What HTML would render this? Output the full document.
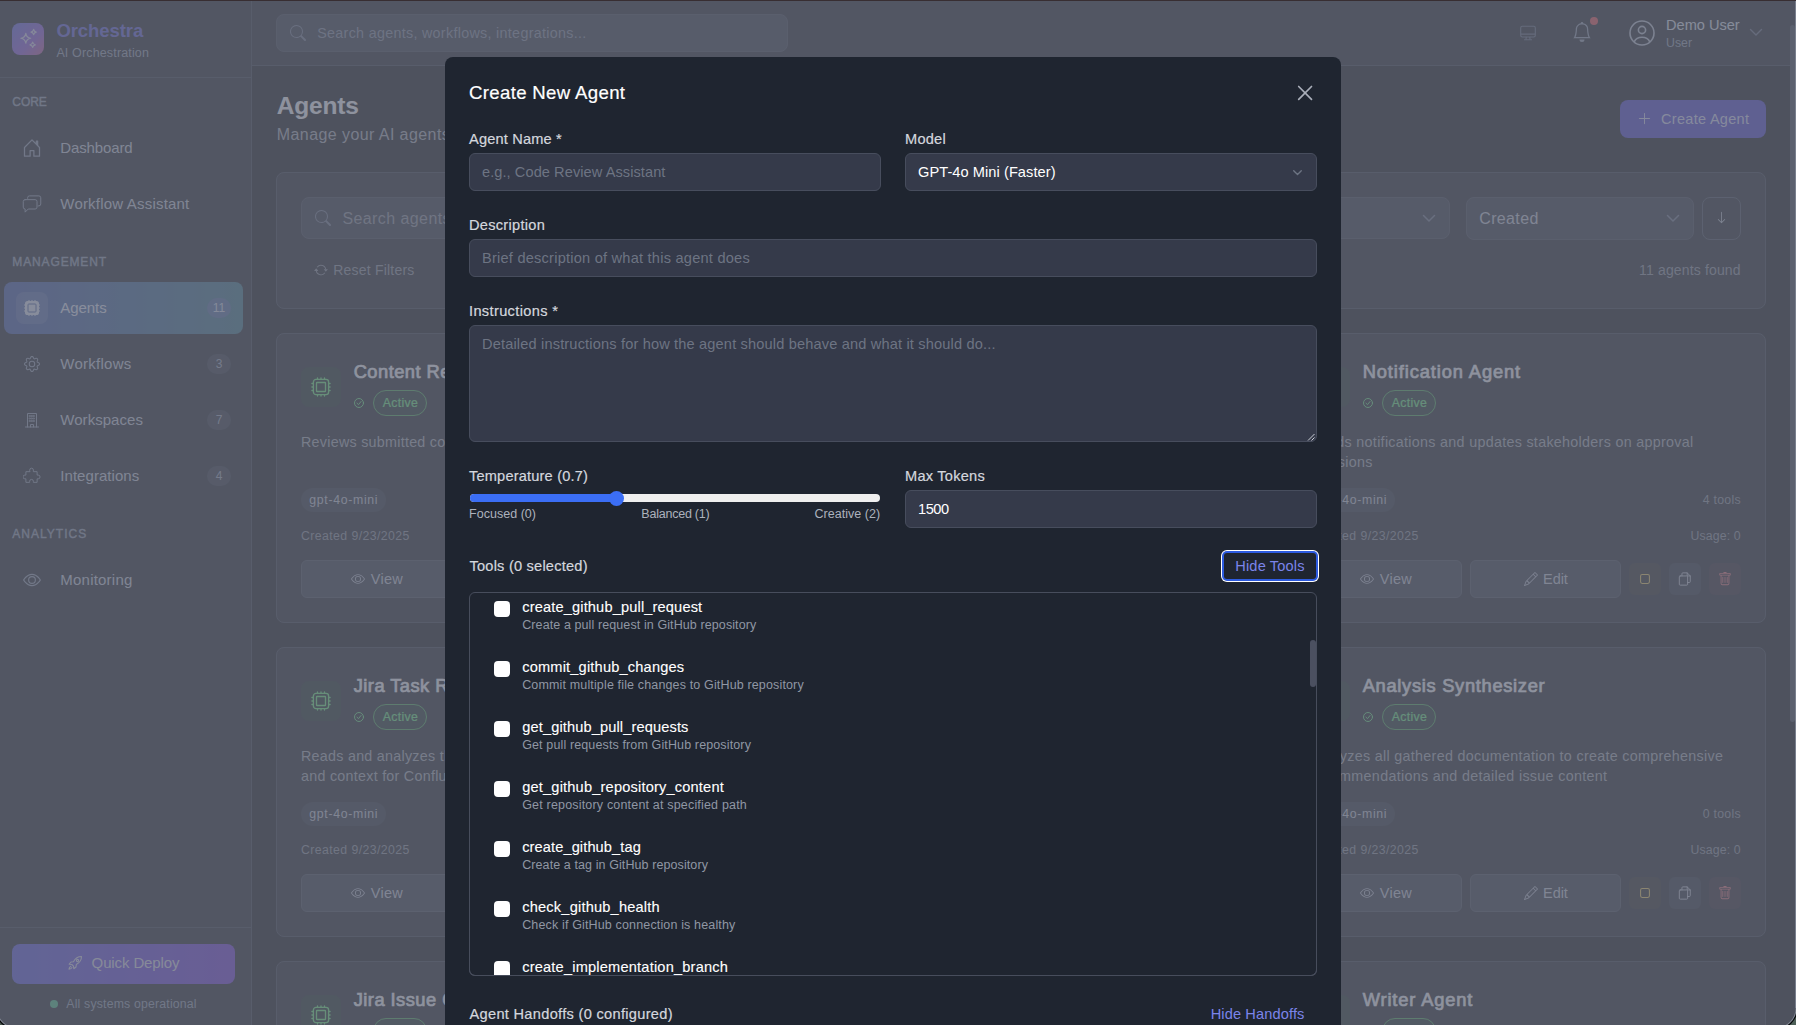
<!DOCTYPE html>
<html lang="en">
<head>
<meta charset="utf-8">
<title>Orchestra - Agents</title>
<style>
*{box-sizing:border-box;margin:0;padding:0}
html,body{width:1796px;height:1025px;overflow:hidden;background:#020203;font-family:"Liberation Sans",sans-serif;color:#fff}
#root{position:relative;width:1796px;height:1025px;overflow:hidden;background:#020203}
.abs{position:absolute}
.t{position:absolute;white-space:nowrap;line-height:1}
svg{display:block}
#sidebar{position:absolute;left:0;top:0;width:252px;height:1025px;border-right:1px solid #2b2e36;background:#111317}
#sb-head{position:absolute;left:0;top:0;width:251px;height:78px;border-bottom:1px solid #2b2e36}
#topbar{position:absolute;left:252px;top:0;width:1544px;height:66px;border-bottom:1px solid #2b2e36;background:#111317}
.card{position:absolute;background:#111317;border:1px solid #2b2e36;border-radius:8px}
.btn{position:absolute;border:1px solid #383c46;border-radius:6px;background:#252831}
#overlay{position:absolute;left:0;top:0;width:1796px;height:1025px;background:rgba(104,109,125,.75)}
#modal{position:absolute;left:445px;top:57px;width:896px;height:1000px;background:#1f2530;border-radius:8px}
.inp{position:absolute;height:38px;background:#353a4a;border:1px solid #474d5d;border-radius:6px}
</style>
</head>
<body>
<div id="root">
<div id="sidebar">
<div id="sb-head"></div>
<div class="abs" style="left:12px;top:23px;width:32px;height:32px;border-radius:8px;background:linear-gradient(135deg,#5b5fe0 0%,#8a4fd8 60%,#c0508f 100%)"></div>
<svg class="abs" style="left:16.6px;top:27.2px;color:#d9d6ec" width="23.5" height="23.5" viewBox="0 0 24 24" fill="none" stroke="#d9d6ec" stroke-width="1.25" stroke-linecap="round" stroke-linejoin="round" ><path d="M9 6.500c.5 3.200 1.800 4.500 5 5-3.200.5-4.500 1.800-5 5-.5-3.200-1.800-4.500-5-5 3.200-.5 4.500-1.800 5-5z"/><path d="M17 2.500c.3 1.700 1 2.400 2.700 2.700-1.700.3-2.400 1-2.700 2.700-.3-1.700-1-2.400-2.700-2.700 1.700-.3 2.400-1 2.700-2.700z"/><path d="M16 15.500c.3 1.700 1 2.400 2.700 2.700-1.700.3-2.400 1-2.700 2.700-.3-1.700-1-2.400-2.700-2.700 1.700-.3 2.400-1 2.700-2.700z"/></svg>
<div class="t" style="left:56.40px;top:21.54px;font-size:18.5px;color:#5a55d6;letter-spacing:-0.076px;font-weight:bold;">Orchestra</div>
<div class="t" style="left:56.40px;top:47.02px;font-size:12.5px;color:#9097a6;letter-spacing:0.145px;">AI Orchestration</div>
<div class="t" style="left:12.30px;top:95.84px;font-size:12px;color:#8b93a3;letter-spacing:-0.057px;-webkit-text-stroke:0.4px #8b93a3;">CORE</div>
<div class="t" style="left:12.30px;top:255.84px;font-size:12px;color:#8b93a3;letter-spacing:0.865px;-webkit-text-stroke:0.4px #8b93a3;">MANAGEMENT</div>
<div class="t" style="left:12.30px;top:527.84px;font-size:12px;color:#8b93a3;letter-spacing:1.013px;-webkit-text-stroke:0.4px #8b93a3;">ANALYTICS</div>
<svg class="abs" style="left:22.0px;top:138.0px;color:#8f97a7" width="20" height="20" viewBox="0 0 16 16" fill="#8f97a7" ><path d="M8.354 1.146a.5.5 0 0 0-.708 0l-6 6A.5.5 0 0 0 1.500 7.500v7a.5.5 0 0 0 .5.5h4.500a.5.5 0 0 0 .5-.5v-4h2v4a.5.5 0 0 0 .5.5H14a.5.5 0 0 0 .5-.5v-7a.5.5 0 0 0-.146-.354L13 5.793V2.500a.5.5 0 0 0-.5-.5h-1a.5.5 0 0 0-.5.5v1.293zM2.500 14V7.707l5.500-5.500 5.500 5.500V14H10v-4a.5.5 0 0 0-.5-.5h-3a.5.5 0 0 0-.5.5v4z"/></svg>
<div class="t" style="left:60.30px;top:139.60px;font-size:15px;color:#c8ccd6;letter-spacing:-0.136px;">Dashboard</div>
<svg class="abs" style="left:22.0px;top:194.0px;color:#8f97a7" width="20" height="20" viewBox="0 0 16 16" fill="none" stroke="#8f97a7" stroke-width="0.8" stroke-linecap="round" stroke-linejoin="round" ><path d="M4.500 3.500V3a1.500 1.500 0 0 1 1.500-1.500h7.500A1.500 1.500 0 0 1 15 3v5a1.500 1.500 0 0 1-1.500 1.500H13"/><path d="M2.500 4.500h8A1.500 1.500 0 0 1 12 6v4.500A1.500 1.500 0 0 1 10.500 12H5l-2.500 2.500V12A1.500 1.500 0 0 1 1 10.500V6a1.500 1.500 0 0 1 1.500-1.500z"/></svg>
<div class="t" style="left:60.30px;top:195.60px;font-size:15px;color:#c8ccd6;letter-spacing:0.199px;">Workflow Assistant</div>
<div class="abs" style="left:4px;top:282px;width:239px;height:52px;border-radius:8px;background:linear-gradient(90deg,#3b4fa0,#33707f)"></div>
<div class="abs" style="left:16px;top:292px;width:32px;height:32px;border-radius:8px;background:rgba(255,255,255,.12)"></div>
<svg class="abs" style="left:24.0px;top:300.0px;color:#e3e7f3" width="16" height="16" viewBox="0 0 16 16" fill="#e3e7f3" ><rect x="1" y="1" width="14" height="14" rx="2.600" fill="currentColor" stroke="none"/><rect x="4" y="4" width="8" height="8" rx=".8" fill="none" stroke="#40599a" stroke-width="1"/><path d="M5 0v1M8 0v1M11 0v1M5 15v1M8 15v1M11 15v1M0 5h1M0 8h1M0 11h1M15 5h1M15 8h1M15 11h1" stroke="currentColor" stroke-width="1.100" stroke-linecap="butt"/></svg>
<div class="t" style="left:60.30px;top:299.60px;font-size:15px;color:#e8ebf5;letter-spacing:-0.061px;">Agents</div>
<div class="abs" style="left:207px;top:298px;width:24px;height:20px;border-radius:10px;background:#4c6a9a"></div>
<div class="t" style="left:212.77px;top:302.14px;font-size:12px;color:#d5daea;letter-spacing:0.000px;">11</div>
<svg class="abs" style="left:24.0px;top:356.0px;color:#8f97a7" width="16" height="16" viewBox="0 0 16 16" fill="#8f97a7" ><path d="M8 4.754a3.246 3.246 0 1 0 0 6.492 3.246 3.246 0 0 0 0-6.492M5.754 8a2.246 2.246 0 1 1 4.492 0 2.246 2.246 0 0 1-4.492 0"/><path d="M9.796 1.343c-.527-1.790-3.065-1.790-3.592 0l-.094.319a.873.873 0 0 1-1.255.520l-.292-.160c-1.640-.892-3.433.902-2.540 2.541l.159.292a.873.873 0 0 1-.520 1.255l-.319.094c-1.790.527-1.790 3.065 0 3.592l.319.094a.873.873 0 0 1 .520 1.255l-.160.292c-.892 1.640.901 3.434 2.541 2.540l.292-.159a.873.873 0 0 1 1.255.520l.094.319c.527 1.790 3.065 1.790 3.592 0l.094-.319a.873.873 0 0 1 1.255-.520l.292.160c1.640.893 3.434-.902 2.540-2.541l-.159-.292a.873.873 0 0 1 .520-1.255l.319-.094c1.790-.527 1.790-3.065 0-3.592l-.319-.094a.873.873 0 0 1-.520-1.255l.160-.292c.893-1.640-.902-3.433-2.541-2.540l-.292.159a.873.873 0 0 1-1.255-.520zm-2.633.283c.246-.835 1.428-.835 1.674 0l.094.319a1.873 1.873 0 0 0 2.693 1.115l.291-.160c.764-.415 1.600.420 1.184 1.185l-.159.292a1.873 1.873 0 0 0 1.116 2.692l.318.094c.835.246.835 1.428 0 1.674l-.319.094a1.873 1.873 0 0 0-1.115 2.693l.160.291c.415.764-.420 1.600-1.185 1.184l-.291-.159a1.873 1.873 0 0 0-2.693 1.116l-.094.318c-.246.835-1.428.835-1.674 0l-.094-.319a1.873 1.873 0 0 0-2.692-1.115l-.292.160c-.764.415-1.600-.420-1.184-1.185l.159-.291A1.873 1.873 0 0 0 1.945 8.930l-.319-.094c-.835-.246-.835-1.428 0-1.674l.319-.094A1.873 1.873 0 0 0 3.060 4.377l-.160-.292c-.415-.764.420-1.600 1.185-1.184l.292.159a1.873 1.873 0 0 0 2.692-1.115z"/></svg>
<div class="t" style="left:60.30px;top:355.60px;font-size:15px;color:#c8ccd6;letter-spacing:0.262px;">Workflows</div>
<div class="abs" style="left:207px;top:354px;width:24px;height:20px;border-radius:10px;background:#24272f"></div>
<div class="t" style="left:215.66px;top:358.14px;font-size:12px;color:#9aa1b1;letter-spacing:0.000px;">3</div>
<svg class="abs" style="left:24.0px;top:412.0px;color:#8f97a7" width="16" height="16" viewBox="0 0 16 16" fill="none" stroke="#8f97a7" stroke-width="1.0" stroke-linecap="round" stroke-linejoin="round" ><path d="M3.500 15V1.500h9V15M1.500 15h13M6.500 15v-2.500h3V15"/><path d="M5.500 3.500h1v1h-1zM7.500 3.500h1v1h-1zM9.500 3.500h1v1h-1zM5.500 6h1v1h-1zM7.500 6h1v1h-1zM9.500 6h1v1h-1zM5.500 8.500h1v1h-1zM7.500 8.500h1v1h-1zM9.500 8.500h1v1h-1z" stroke-width=".7"/></svg>
<div class="t" style="left:60.30px;top:411.60px;font-size:15px;color:#c8ccd6;letter-spacing:0.037px;">Workspaces</div>
<div class="abs" style="left:207px;top:410px;width:24px;height:20px;border-radius:10px;background:#24272f"></div>
<div class="t" style="left:215.66px;top:414.14px;font-size:12px;color:#9aa1b1;letter-spacing:0.000px;">7</div>
<svg class="abs" style="left:23.0px;top:467.0px;color:#8f97a7" width="18" height="18" viewBox="0 0 16 16" fill="none" stroke="#8f97a7" stroke-width="0.8888888888888888" stroke-linecap="round" stroke-linejoin="round" ><path d="M6 3.500a1.750 1.750 0 1 1 3.500 0V5H13v3.200h1a1.750 1.750 0 1 1 0 3.500h-1V15H9.500v-1a1.750 1.750 0 1 0-3.500 0v1H2.500v-3.300h-1a1.750 1.750 0 1 1 0-3.500h1V5H6z" transform="translate(.2 -.6) scale(.95)"/></svg>
<div class="t" style="left:60.30px;top:467.60px;font-size:15px;color:#c8ccd6;letter-spacing:0.046px;">Integrations</div>
<div class="abs" style="left:207px;top:466px;width:24px;height:20px;border-radius:10px;background:#24272f"></div>
<div class="t" style="left:215.66px;top:470.14px;font-size:12px;color:#9aa1b1;letter-spacing:0.000px;">4</div>
<svg class="abs" style="left:23.0px;top:571.0px;color:#8f97a7" width="18" height="18" viewBox="0 0 16 16" fill="#8f97a7" ><path d="M16 8s-3-5.500-8-5.500S0 8 0 8s3 5.500 8 5.500S16 8 16 8M1.173 8a13 13 0 0 1 1.660-2.043C4.120 4.668 5.880 3.500 8 3.500s3.879 1.168 5.168 2.457A13 13 0 0 1 14.828 8q-.086.130-.195.288c-.335.480-.830 1.120-1.465 1.755C11.879 11.332 10.119 12.500 8 12.500s-3.879-1.168-5.168-2.457A13 13 0 0 1 1.172 8z"/><path d="M8 5.500a2.500 2.500 0 1 0 0 5 2.500 2.500 0 0 0 0-5M4.500 8a3.500 3.500 0 1 1 7 0 3.500 3.500 0 0 1-7 0"/></svg>
<div class="t" style="left:60.30px;top:571.60px;font-size:15px;color:#c8ccd6;letter-spacing:0.217px;">Monitoring</div>
<div class="abs" style="left:0px;top:927px;width:251px;height:1px;background:#2b2e36"></div>
<div class="abs" style="left:12px;top:944px;width:223px;height:40px;border-radius:8px;background:linear-gradient(90deg,#4f4bdc,#6d30d8)"></div>
<svg class="abs" style="left:67px;top:955px;color:#dedde9" width="16" height="16" viewBox="0 0 16 16" fill="none" stroke="#dedde9" stroke-width="1.1" stroke-linecap="round" stroke-linejoin="round" ><path d="M14.500 1.500c-3.500 0-6.300 2-8 5.200L4 7l-1.800 2.200 2.600.3 1.700 1.700.3 2.600L9 12l.3-2.500c3.200-1.700 5.200-4.500 5.200-8z"/><circle cx="10.500" cy="5.500" r="1.100"/><path d="M3.800 11.200c-1 .4-1.600 1.600-1.800 3 1.400-.2 2.600-.8 3-1.800"/></svg>
<div class="t" style="left:91.60px;top:955.30px;font-size:15px;color:#dedde9;letter-spacing:-0.118px;">Quick Deploy</div>
<div class="abs" style="left:50px;top:1000px;width:8px;height:8px;border-radius:4px;background:#3cc07a"></div>
<div class="t" style="left:66.30px;top:997.79px;font-size:12.3px;color:#8b93a3;letter-spacing:0.175px;">All systems operational</div>
</div>
<div id="topbar"></div>
<div class="abs" style="left:276px;top:14px;width:512px;height:38px;border-radius:8px;background:#262932;border:1px solid #33363f"></div>
<svg class="abs" style="left:290px;top:25px;color:#6b7385" width="16" height="16" viewBox="0 0 16 16" fill="#6b7385" ><path d="M11.742 10.344a6.500 6.500 0 1 0-1.397 1.398h-.001q.044.060.098.115l3.850 3.850a1 1 0 0 0 1.415-1.414l-3.850-3.850a1 1 0 0 0-.115-.100zM12 6.500a5.500 5.500 0 1 1-11 0 5.500 5.500 0 0 1 11 0"/></svg>
<div class="t" style="left:317.20px;top:25.90px;font-size:14.3px;color:#7d8494;letter-spacing:0.310px;">Search agents, workflows, integrations...</div>
<svg class="abs" style="left:1519px;top:24px" width="18" height="18" viewBox="0 0 16 16" fill="none" stroke="#5b6274" stroke-width="1"><rect x="1.500" y="2" width="13" height="9.500" rx="1.500"/><path d="M1.500 9h13M6.500 11.500l-.3 2M9.500 11.500l.3 2M4.500 14h7"/></svg>
<svg class="abs" style="left:1572px;top:22px;color:#8f97a7" width="20" height="20" viewBox="0 0 16 16" fill="#8f97a7" ><path d="M8 16a2 2 0 0 0 2-2H6a2 2 0 0 0 2 2M8 1.918l-.797.161A4 4 0 0 0 4 6c0 .628-.134 2.197-.459 3.742-.160.767-.376 1.566-.663 2.258h10.244c-.287-.692-.502-1.490-.663-2.258C12.134 8.197 12 6.628 12 6a4 4 0 0 0-3.203-3.920zM14.220 12c.223.447.481.801.780 1H1c.299-.199.557-.553.780-1C2.680 10.200 3 6.880 3 6c0-2.420 1.720-4.440 4.005-4.901a1 1 0 1 1 1.990 0A5 5 0 0 1 13 6c0 .880.320 4.200 1.220 6"/></svg>
<div class="abs" style="left:1590px;top:17px;width:8px;height:8px;border-radius:4px;background:#ef4444"></div>
<svg class="abs" style="left:1629px;top:20px" width="26" height="26" viewBox="0 0 26 26" fill="none" stroke="#b9bec9" stroke-width="1.600"><circle cx="13" cy="13" r="12"/><circle cx="13" cy="10" r="3.600"/><path d="M5.200 21.800c1.400-3 4.300-4.600 7.800-4.600s6.400 1.600 7.800 4.600"/></svg>
<div class="t" style="left:1666.10px;top:18.04px;font-size:14.6px;color:#dfe2ea;letter-spacing:-0.025px;">Demo User</div>
<div class="t" style="left:1666.10px;top:37.09px;font-size:12.3px;color:#8b93a3;letter-spacing:-0.023px;">User</div>
<svg class="abs" style="left:1748.3px;top:24.3px;color:#5f6678" width="16" height="16" viewBox="0 0 16 16" fill="none" stroke="#5f6678" stroke-width="1.4" stroke-linecap="round" stroke-linejoin="round" ><path d="M2.500 5.500 8 11l5.500-5.500"/></svg>
<div id="main">
<div class="t" style="left:276.80px;top:93.96px;font-size:24.5px;color:#ffffff;letter-spacing:-0.169px;font-weight:bold;">Agents</div>
<div class="t" style="left:276.80px;top:127.46px;font-size:16px;color:#a4a7ad;letter-spacing:0.420px;">Manage your AI agents and their configurations</div>
<div class="abs" style="left:1620px;top:100px;width:146px;height:38px;border-radius:8px;background:#4338ca"></div>
<svg class="abs" style="left:1637px;top:111px;color:#dcdcf7" width="15" height="15" viewBox="0 0 16 16" fill="#dcdcf7" ><path d="M8 2a.5.5 0 0 1 .5.5v5h5a.5.5 0 0 1 0 1h-5v5a.5.5 0 0 1-1 0v-5h-5a.5.5 0 0 1 0-1h5v-5A.5.5 0 0 1 8 2"/></svg>
<div class="t" style="left:1661.00px;top:112.03px;font-size:14.5px;color:#dcdcf7;letter-spacing:0.304px;">Create Agent</div>
<div class="card" style="left:276px;top:172px;width:1490px;height:137px"></div>
<div class="abs" style="left:301px;top:197px;width:700px;height:42px;background:#23262f;border:1px solid #33363f;border-radius:8px"></div>
<svg class="abs" style="left:315px;top:210px;color:#6b7385" width="16" height="16" viewBox="0 0 16 16" fill="#6b7385" ><path d="M11.742 10.344a6.500 6.500 0 1 0-1.397 1.398h-.001q.044.060.098.115l3.850 3.850a1 1 0 0 0 1.415-1.414l-3.850-3.850a1 1 0 0 0-.115-.100zM12 6.500a5.500 5.500 0 1 1-11 0 5.500 5.500 0 0 1 11 0"/></svg>
<div class="t" style="left:342.40px;top:211.06px;font-size:16px;color:#878a92;letter-spacing:0.420px;">Search agents...</div>
<div class="abs" style="left:1230px;top:197px;width:220px;height:42px;background:#23262f;border:1px solid #33363f;border-radius:8px"></div>
<svg class="abs" style="left:1420.8px;top:209.7px;color:#6b7385" width="16" height="16" viewBox="0 0 16 16" fill="none" stroke="#6b7385" stroke-width="1.5" stroke-linecap="round" stroke-linejoin="round" ><path d="M2.500 5.500 8 11l5.500-5.500"/></svg>
<div class="abs" style="left:1466px;top:197px;width:228px;height:43px;background:#23262f;border:1px solid #33363f;border-radius:8px"></div>
<div class="t" style="left:1479.30px;top:211.06px;font-size:16px;color:#c5c9d3;letter-spacing:0.346px;">Created</div>
<svg class="abs" style="left:1664.8px;top:209.7px;color:#6b7385" width="16" height="16" viewBox="0 0 16 16" fill="none" stroke="#6b7385" stroke-width="1.5" stroke-linecap="round" stroke-linejoin="round" ><path d="M2.500 5.500 8 11l5.500-5.500"/></svg>
<div class="abs" style="left:1702px;top:197px;width:39px;height:43px;background:#111317;border:1px solid #3a3e48;border-radius:8px"></div>
<svg class="abs" style="left:1715px;top:211px;color:#c5c9d3" width="13" height="13" viewBox="0 0 16 16" fill="#c5c9d3" ><path d="M8 1a.5.5 0 0 1 .5.5v11.793l3.146-3.147a.5.5 0 0 1 .708.708l-4 4a.5.5 0 0 1-.708 0l-4-4a.5.5 0 0 1 .708-.708L7.500 13.293V1.500A.5.5 0 0 1 8 1"/></svg>
<svg class="abs" style="left:314px;top:263px;color:#878a92" width="14" height="14" viewBox="0 0 16 16" fill="#878a92" ><path d="M11.534 7h3.932a.250.250 0 0 1 .192.410l-1.966 2.360a.250.250 0 0 1-.384 0l-1.966-2.360a.250.250 0 0 1 .192-.410m-11 2h3.932a.250.250 0 0 0 .192-.410L2.692 6.230a.250.250 0 0 0-.384 0L.342 8.590A.250.250 0 0 0 .534 9"/><path d="M8 3c-1.552 0-2.940.707-3.857 1.818a.5.5 0 1 1-.771-.636A6.002 6.002 0 0 1 13.917 7H12.900A5 5 0 0 0 8 3M3.100 9a5.002 5.002 0 0 0 8.757 2.182.5.5 0 1 1 .771.636A6.002 6.002 0 0 1 2.083 9z"/></svg>
<div class="t" style="left:333.30px;top:263.15px;font-size:14px;color:#878a92;letter-spacing:0.202px;">Reset Filters</div>
<div class="t" style="left:1639.10px;top:263.15px;font-size:14px;color:#878a92;letter-spacing:0.151px;">11 agents found</div>
<div class="card" style="left:276px;top:333px;width:481px;height:290px"></div>
<div class="abs" style="left:301px;top:367px;width:40px;height:39.5px;border-radius:8px;background:#0d1d12"></div>
<svg class="abs" style="left:311px;top:376.8px;color:#64f06e" width="20" height="20" viewBox="0 0 20 20" fill="none" stroke="#64f06e" stroke-width="1.3" stroke-linecap="round" stroke-linejoin="round" ><rect x="2.400" y="2.400" width="15.200" height="15.200" rx="2.600"/><rect x="5.500" y="5.500" width="9" height="9" rx=".6"/><path d="M6.500 .9v1.300M10 .9v1.300M13.500 .9v1.300M6.500 17.800v1.300M10 17.800v1.300M13.500 17.800v1.300M.9 6.500h1.300M.9 10h1.300M.9 13.500h1.300M17.800 6.500h1.300M17.800 10h1.300M17.800 13.500h1.300"/></svg>
<div class="t" style="left:353.70px;top:362.71px;font-size:18.3px;color:#ffffff;letter-spacing:0.470px;-webkit-text-stroke:0.65px #ffffff;">Content Review Agent</div>
<svg class="abs" style="left:354.2px;top:398px;color:#62ee74" width="10" height="10" viewBox="0 0 16 16" fill="none" stroke="#62ee74" stroke-width="1.5" stroke-linecap="round" stroke-linejoin="round" ><circle cx="8" cy="8" r="7.200"/><path d="M4.800 8.300 7.200 10.600 11.300 5.600"/></svg>
<div class="abs" style="left:373px;top:390px;width:54px;height:26px;border-radius:13px;border:1px solid #40a845;background:#11211a"></div>
<div class="t" style="left:382.70px;top:397.19px;font-size:12.3px;color:#62ee74;letter-spacing:0.340px;-webkit-text-stroke:0.2px #62ee74;">Active</div>
<div class="t" style="left:301.00px;top:435.20px;font-size:14.3px;color:#a4a7ad;letter-spacing:0.270px;">Reviews submitted content for quality and accuracy</div>
<div class="abs" style="left:301px;top:488px;width:85px;height:24px;border-radius:12px;background:#1f2128"></div>
<div class="t" style="left:309.30px;top:493.89px;font-size:12.3px;color:#c5c9d3;letter-spacing:0.678px;">gpt-4o-mini</div>
<div class="t" style="left:301.00px;top:529.89px;font-size:12.3px;color:#878a92;letter-spacing:0.408px;">Created 9/23/2025</div>
<div class="t" style="left:693.80px;top:493.89px;font-size:12.3px;color:#878a92;letter-spacing:0.261px;">3 tools</div>
<div class="t" style="left:681.50px;top:529.89px;font-size:12.3px;color:#878a92;letter-spacing:0.126px;">Usage: 0</div>
<div class="btn" style="left:301px;top:560px;width:152px;height:38px"></div>
<svg class="abs" style="left:351px;top:572px;color:#b9bec9" width="14" height="14" viewBox="0 0 16 16" fill="#b9bec9" ><path d="M16 8s-3-5.500-8-5.500S0 8 0 8s3 5.500 8 5.500S16 8 16 8M1.173 8a13 13 0 0 1 1.660-2.043C4.120 4.668 5.880 3.500 8 3.500s3.879 1.168 5.168 2.457A13 13 0 0 1 14.828 8q-.086.130-.195.288c-.335.480-.830 1.120-1.465 1.755C11.879 11.332 10.119 12.500 8 12.500s-3.879-1.168-5.168-2.457A13 13 0 0 1 1.172 8z"/><path d="M8 5.500a2.500 2.500 0 1 0 0 5 2.500 2.500 0 0 0 0-5M4.500 8a3.500 3.500 0 1 1 7 0 3.500 3.500 0 0 1-7 0"/></svg>
<div class="t" style="left:370.80px;top:572.03px;font-size:14.5px;color:#c5c9d3;letter-spacing:0.276px;">View</div>
<div class="btn" style="left:461px;top:560px;width:151px;height:38px"></div>
<svg class="abs" style="left:515px;top:572px;color:#b9bec9" width="14" height="14" viewBox="0 0 16 16" fill="#b9bec9" ><path d="M12.146.146a.5.5 0 0 1 .708 0l3 3a.5.5 0 0 1 0 .708l-10 10a.5.5 0 0 1-.168.110l-5 2a.5.5 0 0 1-.650-.650l2-5a.5.5 0 0 1 .110-.168zM11.207 2.500 13.500 4.793 14.793 3.500 12.500 1.207zm1.586 3L10.500 3.207 4 9.707V10h.5a.5.5 0 0 1 .5.5v.5h.5a.5.5 0 0 1 .5.5v.5h.293zm-9.761 5.175-.106.106-1.528 3.821 3.821-1.528.106-.106A.5.5 0 0 1 5 12.500V12h-.5a.5.5 0 0 1-.5-.5V11h-.5a.5.5 0 0 1-.468-.325"/></svg>
<div class="t" style="left:534.00px;top:572.03px;font-size:14.5px;color:#c5c9d3;letter-spacing:-0.033px;">Edit</div>
<div class="abs" style="left:620px;top:563px;width:32px;height:32px;border-radius:6px;background:#1c1a12"></div>
<svg class="abs" style="left:629px;top:572px;color:#f2c94c" width="14" height="14" viewBox="0 0 16 16" fill="none" stroke="#f2c94c" stroke-width="1.2" stroke-linecap="round" stroke-linejoin="round" ><rect x="2.950" y="2.950" width="10.100" height="10.100" rx="1.800"/></svg>
<div class="abs" style="left:660px;top:563px;width:32px;height:32px;border-radius:6px;background:#1f2128"></div>
<svg class="abs" style="left:669px;top:572px;color:#c5c9d3" width="14" height="14" viewBox="0 0 16 16" fill="none" stroke="#c5c9d3" stroke-width="1.1" stroke-linecap="round" stroke-linejoin="round" ><path d="M4.500 4.500V2a1 1 0 0 1 1-1h5l3.500 3.500V11a1 1 0 0 1-1 1h-2"/><path d="M10.500 1v3.500H14"/><rect x="1.500" y="4.500" width="9.500" height="10.500" rx="1"/></svg>
<div class="abs" style="left:700px;top:563px;width:32px;height:32px;border-radius:6px;background:#22141a"></div>
<svg class="abs" style="left:709px;top:572px;color:#f26d6d" width="14" height="14" viewBox="0 0 16 16" fill="#f26d6d" ><path d="M5.500 5.500A.5.5 0 0 1 6 6v6a.5.5 0 0 1-1 0V6a.5.5 0 0 1 .5-.5m2.500 0a.5.5 0 0 1 .5.5v6a.5.5 0 0 1-1 0V6a.5.5 0 0 1 .5-.5m3 .5a.5.5 0 0 0-1 0v6a.5.5 0 0 0 1 0z"/><path d="M14.500 3a1 1 0 0 1-1 1H13v9a2 2 0 0 1-2 2H5a2 2 0 0 1-2-2V4h-.5a1 1 0 0 1-1-1V2a1 1 0 0 1 1-1H6a1 1 0 0 1 1-1h2a1 1 0 0 1 1 1h3.500a1 1 0 0 1 1 1zM4.118 4 4 4.059V13a1 1 0 0 0 1 1h6a1 1 0 0 0 1-1V4.059L11.882 4zM2.500 3h11V2h-11z"/></svg>
<div class="card" style="left:1285px;top:333px;width:481px;height:290px"></div>
<div class="abs" style="left:1310px;top:367px;width:40px;height:39.5px;border-radius:8px;background:#0d1d12"></div>
<svg class="abs" style="left:1320px;top:376.8px;color:#64f06e" width="20" height="20" viewBox="0 0 20 20" fill="none" stroke="#64f06e" stroke-width="1.3" stroke-linecap="round" stroke-linejoin="round" ><rect x="2.400" y="2.400" width="15.200" height="15.200" rx="2.600"/><rect x="5.500" y="5.500" width="9" height="9" rx=".6"/><path d="M6.500 .9v1.300M10 .9v1.300M13.500 .9v1.300M6.500 17.800v1.300M10 17.800v1.300M13.500 17.800v1.300M.9 6.500h1.300M.9 10h1.300M.9 13.500h1.300M17.800 6.500h1.300M17.800 10h1.300M17.800 13.500h1.300"/></svg>
<div class="t" style="left:1362.70px;top:362.71px;font-size:18.3px;color:#ffffff;letter-spacing:0.895px;-webkit-text-stroke:0.65px #ffffff;">Notification Agent</div>
<svg class="abs" style="left:1363.2px;top:398px;color:#62ee74" width="10" height="10" viewBox="0 0 16 16" fill="none" stroke="#62ee74" stroke-width="1.5" stroke-linecap="round" stroke-linejoin="round" ><circle cx="8" cy="8" r="7.200"/><path d="M4.800 8.300 7.200 10.600 11.300 5.600"/></svg>
<div class="abs" style="left:1382px;top:390px;width:54px;height:26px;border-radius:13px;border:1px solid #40a845;background:#11211a"></div>
<div class="t" style="left:1391.70px;top:397.19px;font-size:12.3px;color:#62ee74;letter-spacing:0.340px;-webkit-text-stroke:0.2px #62ee74;">Active</div>
<div class="t" style="left:1310.00px;top:435.20px;font-size:14.3px;color:#a4a7ad;letter-spacing:0.305px;">Sends notifications and updates stakeholders on approval</div>
<div class="t" style="left:1310.00px;top:455.20px;font-size:14.3px;color:#a4a7ad;letter-spacing:0.361px;">decisions</div>
<div class="abs" style="left:1310px;top:488px;width:85px;height:24px;border-radius:12px;background:#1f2128"></div>
<div class="t" style="left:1318.30px;top:493.89px;font-size:12.3px;color:#c5c9d3;letter-spacing:0.678px;">gpt-4o-mini</div>
<div class="t" style="left:1310.00px;top:529.89px;font-size:12.3px;color:#878a92;letter-spacing:0.408px;">Created 9/23/2025</div>
<div class="t" style="left:1702.80px;top:493.89px;font-size:12.3px;color:#878a92;letter-spacing:0.261px;">4 tools</div>
<div class="t" style="left:1690.50px;top:529.89px;font-size:12.3px;color:#878a92;letter-spacing:0.126px;">Usage: 0</div>
<div class="btn" style="left:1310px;top:560px;width:152px;height:38px"></div>
<svg class="abs" style="left:1360px;top:572px;color:#b9bec9" width="14" height="14" viewBox="0 0 16 16" fill="#b9bec9" ><path d="M16 8s-3-5.500-8-5.500S0 8 0 8s3 5.500 8 5.500S16 8 16 8M1.173 8a13 13 0 0 1 1.660-2.043C4.120 4.668 5.880 3.500 8 3.500s3.879 1.168 5.168 2.457A13 13 0 0 1 14.828 8q-.086.130-.195.288c-.335.480-.830 1.120-1.465 1.755C11.879 11.332 10.119 12.500 8 12.500s-3.879-1.168-5.168-2.457A13 13 0 0 1 1.172 8z"/><path d="M8 5.500a2.500 2.500 0 1 0 0 5 2.500 2.500 0 0 0 0-5M4.500 8a3.500 3.500 0 1 1 7 0 3.500 3.500 0 0 1-7 0"/></svg>
<div class="t" style="left:1379.80px;top:572.03px;font-size:14.5px;color:#c5c9d3;letter-spacing:0.276px;">View</div>
<div class="btn" style="left:1470px;top:560px;width:151px;height:38px"></div>
<svg class="abs" style="left:1524px;top:572px;color:#b9bec9" width="14" height="14" viewBox="0 0 16 16" fill="#b9bec9" ><path d="M12.146.146a.5.5 0 0 1 .708 0l3 3a.5.5 0 0 1 0 .708l-10 10a.5.5 0 0 1-.168.110l-5 2a.5.5 0 0 1-.650-.650l2-5a.5.5 0 0 1 .110-.168zM11.207 2.500 13.500 4.793 14.793 3.500 12.500 1.207zm1.586 3L10.500 3.207 4 9.707V10h.5a.5.5 0 0 1 .5.5v.5h.5a.5.5 0 0 1 .5.5v.5h.293zm-9.761 5.175-.106.106-1.528 3.821 3.821-1.528.106-.106A.5.5 0 0 1 5 12.500V12h-.5a.5.5 0 0 1-.5-.5V11h-.5a.5.5 0 0 1-.468-.325"/></svg>
<div class="t" style="left:1543.00px;top:572.03px;font-size:14.5px;color:#c5c9d3;letter-spacing:-0.033px;">Edit</div>
<div class="abs" style="left:1629px;top:563px;width:32px;height:32px;border-radius:6px;background:#1c1a12"></div>
<svg class="abs" style="left:1638px;top:572px;color:#f2c94c" width="14" height="14" viewBox="0 0 16 16" fill="none" stroke="#f2c94c" stroke-width="1.2" stroke-linecap="round" stroke-linejoin="round" ><rect x="2.950" y="2.950" width="10.100" height="10.100" rx="1.800"/></svg>
<div class="abs" style="left:1669px;top:563px;width:32px;height:32px;border-radius:6px;background:#1f2128"></div>
<svg class="abs" style="left:1678px;top:572px;color:#c5c9d3" width="14" height="14" viewBox="0 0 16 16" fill="none" stroke="#c5c9d3" stroke-width="1.1" stroke-linecap="round" stroke-linejoin="round" ><path d="M4.500 4.500V2a1 1 0 0 1 1-1h5l3.500 3.500V11a1 1 0 0 1-1 1h-2"/><path d="M10.500 1v3.500H14"/><rect x="1.500" y="4.500" width="9.500" height="10.500" rx="1"/></svg>
<div class="abs" style="left:1709px;top:563px;width:32px;height:32px;border-radius:6px;background:#22141a"></div>
<svg class="abs" style="left:1718px;top:572px;color:#f26d6d" width="14" height="14" viewBox="0 0 16 16" fill="#f26d6d" ><path d="M5.500 5.500A.5.5 0 0 1 6 6v6a.5.5 0 0 1-1 0V6a.5.5 0 0 1 .5-.5m2.500 0a.5.5 0 0 1 .5.5v6a.5.5 0 0 1-1 0V6a.5.5 0 0 1 .5-.5m3 .5a.5.5 0 0 0-1 0v6a.5.5 0 0 0 1 0z"/><path d="M14.500 3a1 1 0 0 1-1 1H13v9a2 2 0 0 1-2 2H5a2 2 0 0 1-2-2V4h-.5a1 1 0 0 1-1-1V2a1 1 0 0 1 1-1H6a1 1 0 0 1 1-1h2a1 1 0 0 1 1 1h3.500a1 1 0 0 1 1 1zM4.118 4 4 4.059V13a1 1 0 0 0 1 1h6a1 1 0 0 0 1-1V4.059L11.882 4zM2.500 3h11V2h-11z"/></svg>
<div class="card" style="left:276px;top:647px;width:481px;height:290px"></div>
<div class="abs" style="left:301px;top:681px;width:40px;height:39.5px;border-radius:8px;background:#0d1d12"></div>
<svg class="abs" style="left:311px;top:690.8px;color:#64f06e" width="20" height="20" viewBox="0 0 20 20" fill="none" stroke="#64f06e" stroke-width="1.3" stroke-linecap="round" stroke-linejoin="round" ><rect x="2.400" y="2.400" width="15.200" height="15.200" rx="2.600"/><rect x="5.500" y="5.500" width="9" height="9" rx=".6"/><path d="M6.500 .9v1.300M10 .9v1.300M13.500 .9v1.300M6.500 17.800v1.300M10 17.800v1.300M13.500 17.800v1.300M.9 6.500h1.300M.9 10h1.300M.9 13.500h1.300M17.800 6.500h1.300M17.800 10h1.300M17.800 13.500h1.300"/></svg>
<div class="t" style="left:353.70px;top:676.71px;font-size:18.3px;color:#ffffff;letter-spacing:0.470px;-webkit-text-stroke:0.65px #ffffff;">Jira Task Reader</div>
<svg class="abs" style="left:354.2px;top:712px;color:#62ee74" width="10" height="10" viewBox="0 0 16 16" fill="none" stroke="#62ee74" stroke-width="1.5" stroke-linecap="round" stroke-linejoin="round" ><circle cx="8" cy="8" r="7.200"/><path d="M4.800 8.300 7.200 10.600 11.300 5.600"/></svg>
<div class="abs" style="left:373px;top:704px;width:54px;height:26px;border-radius:13px;border:1px solid #40a845;background:#11211a"></div>
<div class="t" style="left:382.70px;top:711.19px;font-size:12.3px;color:#62ee74;letter-spacing:0.340px;-webkit-text-stroke:0.2px #62ee74;">Active</div>
<div class="t" style="left:301.00px;top:749.20px;font-size:14.3px;color:#a4a7ad;letter-spacing:0.270px;">Reads and analyzes the Jira task details, requirements,</div>
<div class="t" style="left:301.00px;top:769.20px;font-size:14.3px;color:#a4a7ad;letter-spacing:0.270px;">and context for Confluence documentation</div>
<div class="abs" style="left:301px;top:802px;width:85px;height:24px;border-radius:12px;background:#1f2128"></div>
<div class="t" style="left:309.30px;top:807.89px;font-size:12.3px;color:#c5c9d3;letter-spacing:0.678px;">gpt-4o-mini</div>
<div class="t" style="left:301.00px;top:843.89px;font-size:12.3px;color:#878a92;letter-spacing:0.408px;">Created 9/23/2025</div>
<div class="t" style="left:693.80px;top:807.89px;font-size:12.3px;color:#878a92;letter-spacing:0.261px;">2 tools</div>
<div class="t" style="left:681.50px;top:843.89px;font-size:12.3px;color:#878a92;letter-spacing:0.126px;">Usage: 0</div>
<div class="btn" style="left:301px;top:874px;width:152px;height:38px"></div>
<svg class="abs" style="left:351px;top:886px;color:#b9bec9" width="14" height="14" viewBox="0 0 16 16" fill="#b9bec9" ><path d="M16 8s-3-5.500-8-5.500S0 8 0 8s3 5.500 8 5.500S16 8 16 8M1.173 8a13 13 0 0 1 1.660-2.043C4.120 4.668 5.880 3.500 8 3.500s3.879 1.168 5.168 2.457A13 13 0 0 1 14.828 8q-.086.130-.195.288c-.335.480-.830 1.120-1.465 1.755C11.879 11.332 10.119 12.500 8 12.500s-3.879-1.168-5.168-2.457A13 13 0 0 1 1.172 8z"/><path d="M8 5.500a2.500 2.500 0 1 0 0 5 2.500 2.500 0 0 0 0-5M4.500 8a3.500 3.500 0 1 1 7 0 3.500 3.500 0 0 1-7 0"/></svg>
<div class="t" style="left:370.80px;top:886.03px;font-size:14.5px;color:#c5c9d3;letter-spacing:0.276px;">View</div>
<div class="btn" style="left:461px;top:874px;width:151px;height:38px"></div>
<svg class="abs" style="left:515px;top:886px;color:#b9bec9" width="14" height="14" viewBox="0 0 16 16" fill="#b9bec9" ><path d="M12.146.146a.5.5 0 0 1 .708 0l3 3a.5.5 0 0 1 0 .708l-10 10a.5.5 0 0 1-.168.110l-5 2a.5.5 0 0 1-.650-.650l2-5a.5.5 0 0 1 .110-.168zM11.207 2.500 13.500 4.793 14.793 3.500 12.500 1.207zm1.586 3L10.500 3.207 4 9.707V10h.5a.5.5 0 0 1 .5.5v.5h.5a.5.5 0 0 1 .5.5v.5h.293zm-9.761 5.175-.106.106-1.528 3.821 3.821-1.528.106-.106A.5.5 0 0 1 5 12.500V12h-.5a.5.5 0 0 1-.5-.5V11h-.5a.5.5 0 0 1-.468-.325"/></svg>
<div class="t" style="left:534.00px;top:886.03px;font-size:14.5px;color:#c5c9d3;letter-spacing:-0.033px;">Edit</div>
<div class="abs" style="left:620px;top:877px;width:32px;height:32px;border-radius:6px;background:#1c1a12"></div>
<svg class="abs" style="left:629px;top:886px;color:#f2c94c" width="14" height="14" viewBox="0 0 16 16" fill="none" stroke="#f2c94c" stroke-width="1.2" stroke-linecap="round" stroke-linejoin="round" ><rect x="2.950" y="2.950" width="10.100" height="10.100" rx="1.800"/></svg>
<div class="abs" style="left:660px;top:877px;width:32px;height:32px;border-radius:6px;background:#1f2128"></div>
<svg class="abs" style="left:669px;top:886px;color:#c5c9d3" width="14" height="14" viewBox="0 0 16 16" fill="none" stroke="#c5c9d3" stroke-width="1.1" stroke-linecap="round" stroke-linejoin="round" ><path d="M4.500 4.500V2a1 1 0 0 1 1-1h5l3.500 3.500V11a1 1 0 0 1-1 1h-2"/><path d="M10.500 1v3.500H14"/><rect x="1.500" y="4.500" width="9.500" height="10.500" rx="1"/></svg>
<div class="abs" style="left:700px;top:877px;width:32px;height:32px;border-radius:6px;background:#22141a"></div>
<svg class="abs" style="left:709px;top:886px;color:#f26d6d" width="14" height="14" viewBox="0 0 16 16" fill="#f26d6d" ><path d="M5.500 5.500A.5.5 0 0 1 6 6v6a.5.5 0 0 1-1 0V6a.5.5 0 0 1 .5-.5m2.500 0a.5.5 0 0 1 .5.5v6a.5.5 0 0 1-1 0V6a.5.5 0 0 1 .5-.5m3 .5a.5.5 0 0 0-1 0v6a.5.5 0 0 0 1 0z"/><path d="M14.500 3a1 1 0 0 1-1 1H13v9a2 2 0 0 1-2 2H5a2 2 0 0 1-2-2V4h-.5a1 1 0 0 1-1-1V2a1 1 0 0 1 1-1H6a1 1 0 0 1 1-1h2a1 1 0 0 1 1 1h3.500a1 1 0 0 1 1 1zM4.118 4 4 4.059V13a1 1 0 0 0 1 1h6a1 1 0 0 0 1-1V4.059L11.882 4zM2.500 3h11V2h-11z"/></svg>
<div class="card" style="left:1285px;top:647px;width:481px;height:290px"></div>
<div class="abs" style="left:1310px;top:681px;width:40px;height:39.5px;border-radius:8px;background:#0d1d12"></div>
<svg class="abs" style="left:1320px;top:690.8px;color:#64f06e" width="20" height="20" viewBox="0 0 20 20" fill="none" stroke="#64f06e" stroke-width="1.3" stroke-linecap="round" stroke-linejoin="round" ><rect x="2.400" y="2.400" width="15.200" height="15.200" rx="2.600"/><rect x="5.500" y="5.500" width="9" height="9" rx=".6"/><path d="M6.500 .9v1.300M10 .9v1.300M13.500 .9v1.300M6.500 17.800v1.300M10 17.800v1.300M13.500 17.800v1.300M.9 6.500h1.300M.9 10h1.300M.9 13.500h1.300M17.800 6.500h1.300M17.800 10h1.300M17.800 13.500h1.300"/></svg>
<div class="t" style="left:1362.70px;top:676.71px;font-size:18.3px;color:#ffffff;letter-spacing:0.701px;-webkit-text-stroke:0.65px #ffffff;">Analysis Synthesizer</div>
<svg class="abs" style="left:1363.2px;top:712px;color:#62ee74" width="10" height="10" viewBox="0 0 16 16" fill="none" stroke="#62ee74" stroke-width="1.5" stroke-linecap="round" stroke-linejoin="round" ><circle cx="8" cy="8" r="7.200"/><path d="M4.800 8.300 7.200 10.600 11.300 5.600"/></svg>
<div class="abs" style="left:1382px;top:704px;width:54px;height:26px;border-radius:13px;border:1px solid #40a845;background:#11211a"></div>
<div class="t" style="left:1391.70px;top:711.19px;font-size:12.3px;color:#62ee74;letter-spacing:0.340px;-webkit-text-stroke:0.2px #62ee74;">Active</div>
<div class="t" style="left:1310.00px;top:749.20px;font-size:14.3px;color:#a4a7ad;letter-spacing:0.310px;">Analyzes all gathered documentation to create comprehensive</div>
<div class="t" style="left:1310.00px;top:769.20px;font-size:14.3px;color:#a4a7ad;letter-spacing:0.324px;">recommendations and detailed issue content</div>
<div class="abs" style="left:1310px;top:802px;width:85px;height:24px;border-radius:12px;background:#1f2128"></div>
<div class="t" style="left:1318.30px;top:807.89px;font-size:12.3px;color:#c5c9d3;letter-spacing:0.678px;">gpt-4o-mini</div>
<div class="t" style="left:1310.00px;top:843.89px;font-size:12.3px;color:#878a92;letter-spacing:0.408px;">Created 9/23/2025</div>
<div class="t" style="left:1702.80px;top:807.89px;font-size:12.3px;color:#878a92;letter-spacing:0.261px;">0 tools</div>
<div class="t" style="left:1690.50px;top:843.89px;font-size:12.3px;color:#878a92;letter-spacing:0.126px;">Usage: 0</div>
<div class="btn" style="left:1310px;top:874px;width:152px;height:38px"></div>
<svg class="abs" style="left:1360px;top:886px;color:#b9bec9" width="14" height="14" viewBox="0 0 16 16" fill="#b9bec9" ><path d="M16 8s-3-5.500-8-5.500S0 8 0 8s3 5.500 8 5.500S16 8 16 8M1.173 8a13 13 0 0 1 1.660-2.043C4.120 4.668 5.880 3.500 8 3.500s3.879 1.168 5.168 2.457A13 13 0 0 1 14.828 8q-.086.130-.195.288c-.335.480-.830 1.120-1.465 1.755C11.879 11.332 10.119 12.500 8 12.500s-3.879-1.168-5.168-2.457A13 13 0 0 1 1.172 8z"/><path d="M8 5.500a2.500 2.500 0 1 0 0 5 2.500 2.500 0 0 0 0-5M4.500 8a3.500 3.500 0 1 1 7 0 3.500 3.500 0 0 1-7 0"/></svg>
<div class="t" style="left:1379.80px;top:886.03px;font-size:14.5px;color:#c5c9d3;letter-spacing:0.276px;">View</div>
<div class="btn" style="left:1470px;top:874px;width:151px;height:38px"></div>
<svg class="abs" style="left:1524px;top:886px;color:#b9bec9" width="14" height="14" viewBox="0 0 16 16" fill="#b9bec9" ><path d="M12.146.146a.5.5 0 0 1 .708 0l3 3a.5.5 0 0 1 0 .708l-10 10a.5.5 0 0 1-.168.110l-5 2a.5.5 0 0 1-.650-.650l2-5a.5.5 0 0 1 .110-.168zM11.207 2.500 13.500 4.793 14.793 3.500 12.500 1.207zm1.586 3L10.500 3.207 4 9.707V10h.5a.5.5 0 0 1 .5.5v.5h.5a.5.5 0 0 1 .5.5v.5h.293zm-9.761 5.175-.106.106-1.528 3.821 3.821-1.528.106-.106A.5.5 0 0 1 5 12.500V12h-.5a.5.5 0 0 1-.5-.5V11h-.5a.5.5 0 0 1-.468-.325"/></svg>
<div class="t" style="left:1543.00px;top:886.03px;font-size:14.5px;color:#c5c9d3;letter-spacing:-0.033px;">Edit</div>
<div class="abs" style="left:1629px;top:877px;width:32px;height:32px;border-radius:6px;background:#1c1a12"></div>
<svg class="abs" style="left:1638px;top:886px;color:#f2c94c" width="14" height="14" viewBox="0 0 16 16" fill="none" stroke="#f2c94c" stroke-width="1.2" stroke-linecap="round" stroke-linejoin="round" ><rect x="2.950" y="2.950" width="10.100" height="10.100" rx="1.800"/></svg>
<div class="abs" style="left:1669px;top:877px;width:32px;height:32px;border-radius:6px;background:#1f2128"></div>
<svg class="abs" style="left:1678px;top:886px;color:#c5c9d3" width="14" height="14" viewBox="0 0 16 16" fill="none" stroke="#c5c9d3" stroke-width="1.1" stroke-linecap="round" stroke-linejoin="round" ><path d="M4.500 4.500V2a1 1 0 0 1 1-1h5l3.500 3.500V11a1 1 0 0 1-1 1h-2"/><path d="M10.500 1v3.500H14"/><rect x="1.500" y="4.500" width="9.500" height="10.500" rx="1"/></svg>
<div class="abs" style="left:1709px;top:877px;width:32px;height:32px;border-radius:6px;background:#22141a"></div>
<svg class="abs" style="left:1718px;top:886px;color:#f26d6d" width="14" height="14" viewBox="0 0 16 16" fill="#f26d6d" ><path d="M5.500 5.500A.5.5 0 0 1 6 6v6a.5.5 0 0 1-1 0V6a.5.5 0 0 1 .5-.5m2.500 0a.5.5 0 0 1 .5.5v6a.5.5 0 0 1-1 0V6a.5.5 0 0 1 .5-.5m3 .5a.5.5 0 0 0-1 0v6a.5.5 0 0 0 1 0z"/><path d="M14.500 3a1 1 0 0 1-1 1H13v9a2 2 0 0 1-2 2H5a2 2 0 0 1-2-2V4h-.5a1 1 0 0 1-1-1V2a1 1 0 0 1 1-1H6a1 1 0 0 1 1-1h2a1 1 0 0 1 1 1h3.500a1 1 0 0 1 1 1zM4.118 4 4 4.059V13a1 1 0 0 0 1 1h6a1 1 0 0 0 1-1V4.059L11.882 4zM2.500 3h11V2h-11z"/></svg>
<div class="card" style="left:276px;top:961px;width:481px;height:290px"></div>
<div class="abs" style="left:301px;top:995px;width:40px;height:39.5px;border-radius:8px;background:#0d1d12"></div>
<svg class="abs" style="left:311px;top:1004.8px;color:#64f06e" width="20" height="20" viewBox="0 0 20 20" fill="none" stroke="#64f06e" stroke-width="1.3" stroke-linecap="round" stroke-linejoin="round" ><rect x="2.400" y="2.400" width="15.200" height="15.200" rx="2.600"/><rect x="5.500" y="5.500" width="9" height="9" rx=".6"/><path d="M6.500 .9v1.300M10 .9v1.300M13.500 .9v1.300M6.500 17.800v1.300M10 17.800v1.300M13.500 17.800v1.300M.9 6.500h1.300M.9 10h1.300M.9 13.500h1.300M17.800 6.500h1.300M17.800 10h1.300M17.800 13.500h1.300"/></svg>
<div class="t" style="left:353.70px;top:990.71px;font-size:18.3px;color:#ffffff;letter-spacing:0.470px;-webkit-text-stroke:0.65px #ffffff;">Jira Issue Creator</div>
<svg class="abs" style="left:354.2px;top:1026px;color:#62ee74" width="10" height="10" viewBox="0 0 16 16" fill="none" stroke="#62ee74" stroke-width="1.5" stroke-linecap="round" stroke-linejoin="round" ><circle cx="8" cy="8" r="7.200"/><path d="M4.800 8.300 7.200 10.600 11.300 5.600"/></svg>
<div class="abs" style="left:373px;top:1018px;width:54px;height:26px;border-radius:13px;border:1px solid #40a845;background:#11211a"></div>
<div class="t" style="left:382.70px;top:1025.19px;font-size:12.3px;color:#62ee74;letter-spacing:0.340px;-webkit-text-stroke:0.2px #62ee74;">Active</div>
<div class="abs" style="left:301px;top:1116px;width:85px;height:24px;border-radius:12px;background:#1f2128"></div>
<div class="t" style="left:309.30px;top:1121.89px;font-size:12.3px;color:#c5c9d3;letter-spacing:0.678px;">gpt-4o-mini</div>
<div class="t" style="left:301.00px;top:1157.89px;font-size:12.3px;color:#878a92;letter-spacing:0.408px;">Created 9/23/2025</div>
<div class="btn" style="left:301px;top:1188px;width:152px;height:38px"></div>
<svg class="abs" style="left:351px;top:1200px;color:#b9bec9" width="14" height="14" viewBox="0 0 16 16" fill="#b9bec9" ><path d="M16 8s-3-5.500-8-5.500S0 8 0 8s3 5.500 8 5.500S16 8 16 8M1.173 8a13 13 0 0 1 1.660-2.043C4.120 4.668 5.880 3.500 8 3.500s3.879 1.168 5.168 2.457A13 13 0 0 1 14.828 8q-.086.130-.195.288c-.335.480-.830 1.120-1.465 1.755C11.879 11.332 10.119 12.500 8 12.500s-3.879-1.168-5.168-2.457A13 13 0 0 1 1.172 8z"/><path d="M8 5.500a2.500 2.500 0 1 0 0 5 2.500 2.500 0 0 0 0-5M4.500 8a3.500 3.500 0 1 1 7 0 3.500 3.500 0 0 1-7 0"/></svg>
<div class="t" style="left:370.80px;top:1200.03px;font-size:14.5px;color:#c5c9d3;letter-spacing:0.276px;">View</div>
<div class="btn" style="left:461px;top:1188px;width:151px;height:38px"></div>
<svg class="abs" style="left:515px;top:1200px;color:#b9bec9" width="14" height="14" viewBox="0 0 16 16" fill="#b9bec9" ><path d="M12.146.146a.5.5 0 0 1 .708 0l3 3a.5.5 0 0 1 0 .708l-10 10a.5.5 0 0 1-.168.110l-5 2a.5.5 0 0 1-.650-.650l2-5a.5.5 0 0 1 .110-.168zM11.207 2.500 13.500 4.793 14.793 3.500 12.500 1.207zm1.586 3L10.500 3.207 4 9.707V10h.5a.5.5 0 0 1 .5.5v.5h.5a.5.5 0 0 1 .5.5v.5h.293zm-9.761 5.175-.106.106-1.528 3.821 3.821-1.528.106-.106A.5.5 0 0 1 5 12.500V12h-.5a.5.5 0 0 1-.5-.5V11h-.5a.5.5 0 0 1-.468-.325"/></svg>
<div class="t" style="left:534.00px;top:1200.03px;font-size:14.5px;color:#c5c9d3;letter-spacing:-0.033px;">Edit</div>
<div class="abs" style="left:620px;top:1191px;width:32px;height:32px;border-radius:6px;background:#1c1a12"></div>
<svg class="abs" style="left:629px;top:1200px;color:#f2c94c" width="14" height="14" viewBox="0 0 16 16" fill="none" stroke="#f2c94c" stroke-width="1.2" stroke-linecap="round" stroke-linejoin="round" ><rect x="2.950" y="2.950" width="10.100" height="10.100" rx="1.800"/></svg>
<div class="abs" style="left:660px;top:1191px;width:32px;height:32px;border-radius:6px;background:#1f2128"></div>
<svg class="abs" style="left:669px;top:1200px;color:#c5c9d3" width="14" height="14" viewBox="0 0 16 16" fill="none" stroke="#c5c9d3" stroke-width="1.1" stroke-linecap="round" stroke-linejoin="round" ><path d="M4.500 4.500V2a1 1 0 0 1 1-1h5l3.500 3.500V11a1 1 0 0 1-1 1h-2"/><path d="M10.500 1v3.500H14"/><rect x="1.500" y="4.500" width="9.500" height="10.500" rx="1"/></svg>
<div class="abs" style="left:700px;top:1191px;width:32px;height:32px;border-radius:6px;background:#22141a"></div>
<svg class="abs" style="left:709px;top:1200px;color:#f26d6d" width="14" height="14" viewBox="0 0 16 16" fill="#f26d6d" ><path d="M5.500 5.500A.5.5 0 0 1 6 6v6a.5.5 0 0 1-1 0V6a.5.5 0 0 1 .5-.5m2.500 0a.5.5 0 0 1 .5.5v6a.5.5 0 0 1-1 0V6a.5.5 0 0 1 .5-.5m3 .5a.5.5 0 0 0-1 0v6a.5.5 0 0 0 1 0z"/><path d="M14.500 3a1 1 0 0 1-1 1H13v9a2 2 0 0 1-2 2H5a2 2 0 0 1-2-2V4h-.5a1 1 0 0 1-1-1V2a1 1 0 0 1 1-1H6a1 1 0 0 1 1-1h2a1 1 0 0 1 1 1h3.500a1 1 0 0 1 1 1zM4.118 4 4 4.059V13a1 1 0 0 0 1 1h6a1 1 0 0 0 1-1V4.059L11.882 4zM2.500 3h11V2h-11z"/></svg>
<div class="card" style="left:1285px;top:961px;width:481px;height:290px"></div>
<div class="abs" style="left:1310px;top:995px;width:40px;height:39.5px;border-radius:8px;background:#0d1d12"></div>
<svg class="abs" style="left:1320px;top:1004.8px;color:#64f06e" width="20" height="20" viewBox="0 0 20 20" fill="none" stroke="#64f06e" stroke-width="1.3" stroke-linecap="round" stroke-linejoin="round" ><rect x="2.400" y="2.400" width="15.200" height="15.200" rx="2.600"/><rect x="5.500" y="5.500" width="9" height="9" rx=".6"/><path d="M6.500 .9v1.300M10 .9v1.300M13.500 .9v1.300M6.500 17.800v1.300M10 17.800v1.300M13.500 17.800v1.300M.9 6.500h1.300M.9 10h1.300M.9 13.500h1.300M17.800 6.500h1.300M17.800 10h1.300M17.800 13.500h1.300"/></svg>
<div class="t" style="left:1362.70px;top:990.71px;font-size:18.3px;color:#ffffff;letter-spacing:0.858px;-webkit-text-stroke:0.65px #ffffff;">Writer Agent</div>
<svg class="abs" style="left:1363.2px;top:1026px;color:#62ee74" width="10" height="10" viewBox="0 0 16 16" fill="none" stroke="#62ee74" stroke-width="1.5" stroke-linecap="round" stroke-linejoin="round" ><circle cx="8" cy="8" r="7.200"/><path d="M4.800 8.300 7.200 10.600 11.300 5.600"/></svg>
<div class="abs" style="left:1382px;top:1018px;width:54px;height:26px;border-radius:13px;border:1px solid #40a845;background:#11211a"></div>
<div class="t" style="left:1391.70px;top:1025.19px;font-size:12.3px;color:#62ee74;letter-spacing:0.340px;-webkit-text-stroke:0.2px #62ee74;">Active</div>
<div class="abs" style="left:1310px;top:1116px;width:85px;height:24px;border-radius:12px;background:#1f2128"></div>
<div class="t" style="left:1318.30px;top:1121.89px;font-size:12.3px;color:#c5c9d3;letter-spacing:0.678px;">gpt-4o-mini</div>
<div class="t" style="left:1310.00px;top:1157.89px;font-size:12.3px;color:#878a92;letter-spacing:0.408px;">Created 9/23/2025</div>
<div class="btn" style="left:1310px;top:1188px;width:152px;height:38px"></div>
<svg class="abs" style="left:1360px;top:1200px;color:#b9bec9" width="14" height="14" viewBox="0 0 16 16" fill="#b9bec9" ><path d="M16 8s-3-5.500-8-5.500S0 8 0 8s3 5.500 8 5.500S16 8 16 8M1.173 8a13 13 0 0 1 1.660-2.043C4.120 4.668 5.880 3.500 8 3.500s3.879 1.168 5.168 2.457A13 13 0 0 1 14.828 8q-.086.130-.195.288c-.335.480-.830 1.120-1.465 1.755C11.879 11.332 10.119 12.500 8 12.500s-3.879-1.168-5.168-2.457A13 13 0 0 1 1.172 8z"/><path d="M8 5.500a2.500 2.500 0 1 0 0 5 2.500 2.500 0 0 0 0-5M4.500 8a3.500 3.500 0 1 1 7 0 3.500 3.500 0 0 1-7 0"/></svg>
<div class="t" style="left:1379.80px;top:1200.03px;font-size:14.5px;color:#c5c9d3;letter-spacing:0.276px;">View</div>
<div class="btn" style="left:1470px;top:1188px;width:151px;height:38px"></div>
<svg class="abs" style="left:1524px;top:1200px;color:#b9bec9" width="14" height="14" viewBox="0 0 16 16" fill="#b9bec9" ><path d="M12.146.146a.5.5 0 0 1 .708 0l3 3a.5.5 0 0 1 0 .708l-10 10a.5.5 0 0 1-.168.110l-5 2a.5.5 0 0 1-.650-.650l2-5a.5.5 0 0 1 .110-.168zM11.207 2.500 13.500 4.793 14.793 3.500 12.500 1.207zm1.586 3L10.500 3.207 4 9.707V10h.5a.5.5 0 0 1 .5.5v.5h.5a.5.5 0 0 1 .5.5v.5h.293zm-9.761 5.175-.106.106-1.528 3.821 3.821-1.528.106-.106A.5.5 0 0 1 5 12.500V12h-.5a.5.5 0 0 1-.5-.5V11h-.5a.5.5 0 0 1-.468-.325"/></svg>
<div class="t" style="left:1543.00px;top:1200.03px;font-size:14.5px;color:#c5c9d3;letter-spacing:-0.033px;">Edit</div>
<div class="abs" style="left:1629px;top:1191px;width:32px;height:32px;border-radius:6px;background:#1c1a12"></div>
<svg class="abs" style="left:1638px;top:1200px;color:#f2c94c" width="14" height="14" viewBox="0 0 16 16" fill="none" stroke="#f2c94c" stroke-width="1.2" stroke-linecap="round" stroke-linejoin="round" ><rect x="2.950" y="2.950" width="10.100" height="10.100" rx="1.800"/></svg>
<div class="abs" style="left:1669px;top:1191px;width:32px;height:32px;border-radius:6px;background:#1f2128"></div>
<svg class="abs" style="left:1678px;top:1200px;color:#c5c9d3" width="14" height="14" viewBox="0 0 16 16" fill="none" stroke="#c5c9d3" stroke-width="1.1" stroke-linecap="round" stroke-linejoin="round" ><path d="M4.500 4.500V2a1 1 0 0 1 1-1h5l3.500 3.500V11a1 1 0 0 1-1 1h-2"/><path d="M10.500 1v3.500H14"/><rect x="1.500" y="4.500" width="9.500" height="10.500" rx="1"/></svg>
<div class="abs" style="left:1709px;top:1191px;width:32px;height:32px;border-radius:6px;background:#22141a"></div>
<svg class="abs" style="left:1718px;top:1200px;color:#f26d6d" width="14" height="14" viewBox="0 0 16 16" fill="#f26d6d" ><path d="M5.500 5.500A.5.5 0 0 1 6 6v6a.5.5 0 0 1-1 0V6a.5.5 0 0 1 .5-.5m2.500 0a.5.5 0 0 1 .5.5v6a.5.5 0 0 1-1 0V6a.5.5 0 0 1 .5-.5m3 .5a.5.5 0 0 0-1 0v6a.5.5 0 0 0 1 0z"/><path d="M14.500 3a1 1 0 0 1-1 1H13v9a2 2 0 0 1-2 2H5a2 2 0 0 1-2-2V4h-.5a1 1 0 0 1-1-1V2a1 1 0 0 1 1-1H6a1 1 0 0 1 1-1h2a1 1 0 0 1 1 1h3.500a1 1 0 0 1 1 1zM4.118 4 4 4.059V13a1 1 0 0 0 1 1h6a1 1 0 0 0 1-1V4.059L11.882 4zM2.500 3h11V2h-11z"/></svg>
</div>
<div id="overlay"></div>
<div id="modal">
<div class="t" style="left:24.00px;top:26.66px;font-size:18.6px;color:#ffffff;letter-spacing:0.340px;-webkit-text-stroke:0.2px #ffffff;">Create New Agent</div>
<svg class="abs" style="left:852px;top:28px" width="16" height="16" viewBox="0 0 16 16" fill="none" stroke="#a9aeb9" stroke-width="1.700" stroke-linecap="round"><path d="M1.700 1.500 14.500 14.300M14.500 1.500 1.700 14.300"/></svg>
<div class="t" style="left:24.00px;top:74.74px;font-size:14.6px;color:#d4d7de;letter-spacing:0.167px;-webkit-text-stroke:0.2px #d4d7de;">Agent Name *</div>
<div class="inp" style="left:24px;top:96px;width:412px"></div>
<div class="t" style="left:37.00px;top:107.74px;font-size:14.6px;color:#6d7483;letter-spacing:0.065px;">e.g., Code Review Assistant</div>
<div class="t" style="left:460.00px;top:74.74px;font-size:14.6px;color:#d4d7de;letter-spacing:0.238px;-webkit-text-stroke:0.2px #d4d7de;">Model</div>
<div class="inp" style="left:460px;top:96px;width:412px"></div>
<div class="t" style="left:473.00px;top:107.74px;font-size:14.6px;color:#ffffff;letter-spacing:0.067px;">GPT-4o Mini (Faster)</div>
<svg class="abs" style="left:847px;top:110px" width="11" height="11" viewBox="0 0 16 16" fill="none" stroke="#6d7483" stroke-width="2" stroke-linecap="round" stroke-linejoin="round"><path d="M2.500 5.500 8 11l5.500-5.500"/></svg>
<div class="t" style="left:24.00px;top:160.74px;font-size:14.6px;color:#d4d7de;letter-spacing:0.280px;-webkit-text-stroke:0.2px #d4d7de;">Description</div>
<div class="inp" style="left:24px;top:182px;width:848px"></div>
<div class="t" style="left:37.00px;top:193.74px;font-size:14.6px;color:#6d7483;letter-spacing:0.223px;">Brief description of what this agent does</div>
<div class="t" style="left:24.00px;top:246.74px;font-size:14.6px;color:#d4d7de;letter-spacing:0.349px;-webkit-text-stroke:0.2px #d4d7de;">Instructions *</div>
<div class="inp" style="left:24px;top:268px;width:848px;height:117px"></div>
<div class="t" style="left:37.00px;top:279.74px;font-size:14.6px;color:#6d7483;letter-spacing:0.157px;">Detailed instructions for how the agent should behave and what it should do...</div>
<svg class="abs" style="left:862px;top:376px" width="8" height="8" viewBox="0 0 8 8" fill="none" stroke="#c9cdd5" stroke-width="1"><path d="M1 7.500 7.500 1M4.500 7.500 7.500 4.500"/></svg>
<div class="t" style="left:24.00px;top:411.74px;font-size:14.6px;color:#d4d7de;letter-spacing:0.181px;-webkit-text-stroke:0.2px #d4d7de;">Temperature (0.7)</div>
<div class="abs" style="left:25px;top:437px;width:410px;height:8px;border-radius:4px;background:#efefef"></div>
<div class="abs" style="left:25px;top:437px;width:150px;height:8px;border-radius:4px;background:#3b6ef5"></div>
<div class="abs" style="left:163.500px;top:433.500px;width:15px;height:15px;border-radius:8px;background:#3b6ef5"></div>
<div class="t" style="left:24.00px;top:450.82px;font-size:12.5px;color:#adb2bd;letter-spacing:0.030px;">Focused (0)</div>
<div class="t" style="left:196.30px;top:450.82px;font-size:12.5px;color:#adb2bd;letter-spacing:-0.225px;">Balanced (1)</div>
<div class="t" style="left:369.50px;top:450.82px;font-size:12.5px;color:#adb2bd;letter-spacing:0.028px;">Creative (2)</div>
<div class="t" style="left:460.00px;top:411.74px;font-size:14.6px;color:#d4d7de;letter-spacing:0.232px;-webkit-text-stroke:0.2px #d4d7de;">Max Tokens</div>
<div class="inp" style="left:460px;top:433px;width:412px"></div>
<div class="t" style="left:473.00px;top:444.74px;font-size:14.6px;color:#ffffff;letter-spacing:-0.490px;">1500</div>
<div class="t" style="left:24.50px;top:501.74px;font-size:14.6px;color:#d4d7de;letter-spacing:0.213px;-webkit-text-stroke:0.2px #d4d7de;">Tools (0 selected)</div>
<div class="abs" style="left:776px;top:493px;width:98px;height:32px;border-radius:6px;background:#fff"></div>
<div class="abs" style="left:777px;top:494px;width:96px;height:30px;border-radius:5px;background:#2d5be0"></div>
<div class="abs" style="left:779px;top:496px;width:92px;height:26px;border-radius:3px;background:#1f2530"></div>
<div class="t" style="left:790.30px;top:501.74px;font-size:14.6px;color:#7b84ea;letter-spacing:0.147px;">Hide Tools</div>
<div class="abs" style="left:24px;top:535px;width:848px;height:384px;border:1px solid #474d5c;border-radius:6px"></div>
<div class="abs" style="left:49.300px;top:543.9px;width:15.400px;height:15.7px;border-radius:4px;background:#fff"></div>
<div class="t" style="left:77.20px;top:542.74px;font-size:14.6px;color:#ffffff;letter-spacing:0.157px;-webkit-text-stroke:0.12px #ffffff;">create_github_pull_request</div>
<div class="t" style="left:77.20px;top:562.02px;font-size:12.5px;color:#9097a4;letter-spacing:0.100px;">Create a pull request in GitHub repository</div>
<div class="abs" style="left:49.300px;top:603.9px;width:15.400px;height:15.7px;border-radius:4px;background:#fff"></div>
<div class="t" style="left:77.20px;top:602.74px;font-size:14.6px;color:#ffffff;letter-spacing:0.185px;-webkit-text-stroke:0.12px #ffffff;">commit_github_changes</div>
<div class="t" style="left:77.20px;top:622.02px;font-size:12.5px;color:#9097a4;letter-spacing:0.147px;">Commit multiple file changes to GitHub repository</div>
<div class="abs" style="left:49.300px;top:663.9px;width:15.400px;height:15.7px;border-radius:4px;background:#fff"></div>
<div class="t" style="left:77.20px;top:662.74px;font-size:14.6px;color:#ffffff;letter-spacing:0.135px;-webkit-text-stroke:0.12px #ffffff;">get_github_pull_requests</div>
<div class="t" style="left:77.20px;top:682.02px;font-size:12.5px;color:#9097a4;letter-spacing:0.128px;">Get pull requests from GitHub repository</div>
<div class="abs" style="left:49.300px;top:723.9px;width:15.400px;height:15.7px;border-radius:4px;background:#fff"></div>
<div class="t" style="left:77.20px;top:722.74px;font-size:14.6px;color:#ffffff;letter-spacing:0.187px;-webkit-text-stroke:0.12px #ffffff;">get_github_repository_content</div>
<div class="t" style="left:77.20px;top:742.02px;font-size:12.5px;color:#9097a4;letter-spacing:0.182px;">Get repository content at specified path</div>
<div class="abs" style="left:49.300px;top:783.9px;width:15.400px;height:15.7px;border-radius:4px;background:#fff"></div>
<div class="t" style="left:77.20px;top:782.74px;font-size:14.6px;color:#ffffff;letter-spacing:0.110px;-webkit-text-stroke:0.12px #ffffff;">create_github_tag</div>
<div class="t" style="left:77.20px;top:802.02px;font-size:12.5px;color:#9097a4;letter-spacing:0.093px;">Create a tag in GitHub repository</div>
<div class="abs" style="left:49.300px;top:843.9px;width:15.400px;height:15.7px;border-radius:4px;background:#fff"></div>
<div class="t" style="left:77.20px;top:842.74px;font-size:14.6px;color:#ffffff;letter-spacing:0.201px;-webkit-text-stroke:0.12px #ffffff;">check_github_health</div>
<div class="t" style="left:77.20px;top:862.02px;font-size:12.5px;color:#9097a4;letter-spacing:0.149px;">Check if GitHub connection is healthy</div>
<div class="abs" style="left:49.300px;top:903.9px;width:15.400px;height:14px;border-radius:4px 4px 0 0;background:#fff"></div>
<div class="t" style="left:77.20px;top:902.74px;font-size:14.6px;color:#ffffff;letter-spacing:0.197px;-webkit-text-stroke:0.12px #ffffff;">create_implementation_branch</div>
<div class="abs" style="left:24px;top:919px;width:848px;height:14px;background:#1f2530"></div>
<div class="abs" style="left:24px;top:905px;width:848px;height:14px;border:1px solid #474d5c;border-top:none;border-radius:0 0 6px 6px"></div>
<div class="abs" style="left:865px;top:583px;width:6px;height:47px;border-radius:3px;background:#4b5060"></div>
<div class="t" style="left:24.50px;top:949.74px;font-size:14.6px;color:#d4d7de;letter-spacing:0.306px;-webkit-text-stroke:0.2px #d4d7de;">Agent Handoffs (0 configured)</div>
<div class="t" style="left:765.70px;top:949.74px;font-size:14.6px;color:#7b84ea;letter-spacing:0.123px;">Hide Handoffs</div>
</div>
<div id="chrome">
  <div class="abs" style="left:0;top:0;width:1796px;height:1px;background:#382e32"></div>
  <div class="abs" style="left:1795px;top:1px;width:1px;height:1007px;background:#7a808e"></div>
  <div class="abs" style="left:1790px;top:25px;width:5px;height:697px;border-radius:3px;background:#5b606e"></div>
  <svg class="abs" style="left:0;top:1008px" width="16" height="17" viewBox="0 1008 16 17">
    <path fill-rule="evenodd" fill="#7f8592" d="M0 1008H16V1025H0Z M-2.900 1008a19.600 19.600 0 1 0 39.200 0a19.600 19.600 0 1 0-39.200 0Z"/>
    <path fill-rule="evenodd" fill="#06080a" d="M0 1008H16V1025H0Z M-3.900 1008a20.600 20.600 0 1 0 41.200 0a20.600 20.600 0 1 0-41.200 0Z"/>
    <path fill-rule="evenodd" fill="#45524b" d="M0 1008H16V1025H0Z M-5.100 1008a21.800 21.800 0 1 0 43.600 0a21.800 21.800 0 1 0-43.600 0Z"/>
  </svg>
  <svg class="abs" style="left:1778px;top:1008px" width="18" height="17" viewBox="1778 1008 18 17">
    <path fill-rule="evenodd" fill="#7f8592" d="M1778 1008H1796V1025H1778Z M1756.400 1008a19.600 19.600 0 1 0 39.200 0a19.600 19.600 0 1 0-39.200 0Z"/>
    <path fill-rule="evenodd" fill="#06080a" d="M1778 1008H1796V1025H1778Z M1755.400 1008a20.600 20.600 0 1 0 41.200 0a20.600 20.600 0 1 0-41.200 0Z"/>
    <path fill-rule="evenodd" fill="#4e6058" d="M1778 1008H1796V1025H1778Z M1754.200 1008a21.800 21.800 0 1 0 43.600 0a21.800 21.800 0 1 0-43.600 0Z"/>
  </svg>
</div>
</div>
</body>
</html>
